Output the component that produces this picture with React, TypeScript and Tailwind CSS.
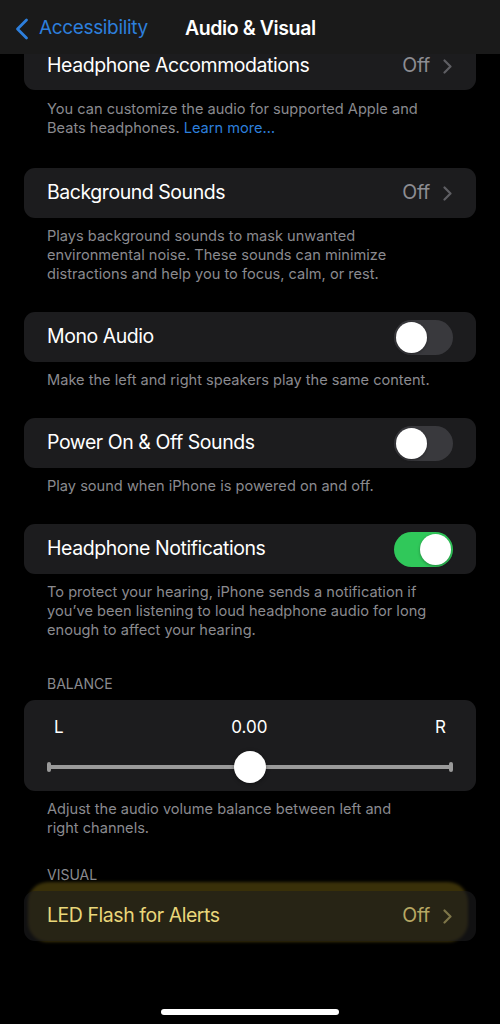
import React from "react";

const font = { fontFamily: "Inter, 'Noto Sans', 'Liberation Sans', sans-serif" };

function Chevron({ className = "" }: { className?: string }) {
  return (
    <svg width="9" height="15" viewBox="0 0 9 15" className={className} fill="none">
      <path d="M1.5 1.5 L7.5 7.5 L1.5 13.5" stroke="currentColor" strokeWidth="2.2" strokeLinecap="round" strokeLinejoin="round" />
    </svg>
  );
}

function Toggle({ on }: { on: boolean }) {
  return (
    <div
      className={`flex h-[35px] w-[59px] items-center rounded-full px-[2px] ${
        on ? "justify-end bg-[#30c85a]" : "justify-start bg-[#39393d]"
      }`}
    >
      <div className="h-[31px] w-[31px] rounded-full bg-white shadow-[0_1px_3px_rgba(0,0,0,0.35)]" />
    </div>
  );
}

function Footer({ children, className = "" }: { children: React.ReactNode; className?: string }) {
  return (
    <p className={`px-[47px] pt-[9px] text-[14.6px] leading-[19px] text-[#8a8a8f] ${className}`}>{children}</p>
  );
}

function Card({ children, className = "" }: { children: React.ReactNode; className?: string }) {
  return <div className={`mx-[24px] rounded-[11px] bg-[#1c1c1e] ${className}`}>{children}</div>;
}

const labelCls = "text-[19.5px] tracking-[-0.45px] text-white";
const offCls = "flex items-center gap-[13px] text-[19.5px] tracking-[-0.3px] text-[#8d8d92]";

function LinkRow({ label }: { label: string }) {
  return (
    <Card className="flex h-[50px] items-center justify-between pl-[23px] pr-[24px]">
      <span className={labelCls}>{label}</span>
      <span className={offCls}>
        Off
        <Chevron className="text-[#5e5e63]" />
      </span>
    </Card>
  );
}

function ToggleRow({ label, on }: { label: string; on: boolean }) {
  return (
    <Card className="flex h-[50px] items-center justify-between pl-[23px] pr-[23px]">
      <span className={labelCls}>{label}</span>
      <Toggle on={on} />
    </Card>
  );
}

export default function App() {
  return (
    <div style={font} className="relative h-[1024px] w-[500px] overflow-hidden bg-black">
      {/* navigation bar */}
      <header className="flex h-[54px] items-center bg-[#1a1a1a] pt-[3px]">
        <div className="flex w-[170px] items-center pl-[15px] text-[#2d7fdc]">
          <svg width="14" height="22" viewBox="0 0 14 22" fill="none" className="mr-[10px]">
            <path d="M11.5 2 L2.5 11 L11.5 20" stroke="currentColor" strokeWidth="2.8" strokeLinecap="round" strokeLinejoin="round" />
          </svg>
          <span className="text-[19px] tracking-[-0.35px]">Accessibility</span>
        </div>
        <h1 className="ml-[15px] text-[19.5px] font-semibold tracking-[-0.4px] text-white">Audio &amp; Visual</h1>
      </header>

      {/* first row, scrolled partly under the bar */}
      <div className="mx-[24px] h-[36px] overflow-hidden rounded-b-[11px]">
        <div className="-mt-[13px] flex h-[50px] items-center justify-between bg-[#1c1c1e] pl-[23px] pr-[24px]">
          <span className={labelCls}>Headphone Accommodations</span>
          <span className={offCls}>
            Off
            <Chevron className="text-[#5e5e63]" />
          </span>
        </div>
      </div>
      <Footer className="mb-[30px] pt-[10px]">
        You can customize the audio for supported Apple and Beats headphones.{" "}
        <span className="text-[#2d7fdc]">Learn more…</span>
      </Footer>

      <LinkRow label="Background Sounds" />
      <Footer className="mb-[28px]">
        Plays background sounds to mask unwanted environmental noise. These sounds can minimize distractions and help
        you to focus, calm, or rest.
      </Footer>

      <ToggleRow label="Mono Audio" on={false} />
      <Footer className="mb-[28px]">Make the left and right speakers play the same content.</Footer>

      <ToggleRow label="Power On & Off Sounds" on={false} />
      <Footer className="mb-[28px]">Play sound when iPhone is powered on and off.</Footer>

      <ToggleRow label="Headphone Notifications" on={true} />
      <Footer className="pr-[40px]">
        To protect your hearing, iPhone sends a notification if you’ve been listening to loud headphone audio for long
        enough to affect your hearing.
      </Footer>

      <div className="mt-[35px] px-[47px] pb-[8px] text-[14px] leading-[17px] text-[#8a8a8f]">BALANCE</div>
      <Card className="h-[91px] px-[23px] pt-[17px]">
        <div className="flex items-center justify-between px-[7px] text-[17px] leading-[20px] text-white">
          <span>L</span>
          <span>0.00</span>
          <span>R</span>
        </div>
        <div className="relative mt-[14px] flex h-[32px] items-center">
          <div className="h-[10px] w-[4px] rounded-[2px] bg-[#9a9a9a]" />
          <div className="h-[4px] flex-1 bg-[#9a9a9a]" />
          <div className="h-[10px] w-[4px] rounded-[2px] bg-[#9a9a9a]" />
          <div className="absolute left-1/2 top-0 h-[32px] w-[32px] -translate-x-1/2 rounded-full bg-white shadow-[0_1px_4px_rgba(0,0,0,0.4)]" />
        </div>
      </Card>
      <Footer className="pt-[8px] pr-[100px]">Adjust the audio volume balance between left and right channels.</Footer>

      <div className="mt-[28px] px-[47px] pb-[8px] text-[14px] leading-[17px] text-[#8a8a8f]">VISUAL</div>
      <div className="relative">
        {/* marker highlight across the row */}
        <div className="absolute left-[28px] top-[-9px] h-[60px] w-[440px] rounded-[20px] bg-[rgba(135,114,22,0.42)] blur-[1.5px]" />
        <Card className="relative flex h-[50px] items-center justify-between bg-[#1c1c1e]/60 pl-[23px] pr-[24px]">
          <span className="text-[19.5px] tracking-[-0.45px] text-[#ead77a]">LED Flash for Alerts</span>
          <span className="flex items-center gap-[13px] text-[19.5px] tracking-[-0.3px] text-[#b7a863]">
            Off
            <Chevron className="text-[#7d7548]" />
          </span>
        </Card>
      </div>

      {/* home indicator */}
      <div className="absolute bottom-[9px] left-1/2 h-[6px] w-[178px] -translate-x-1/2 rounded-full bg-white" />
    </div>
  );
}
